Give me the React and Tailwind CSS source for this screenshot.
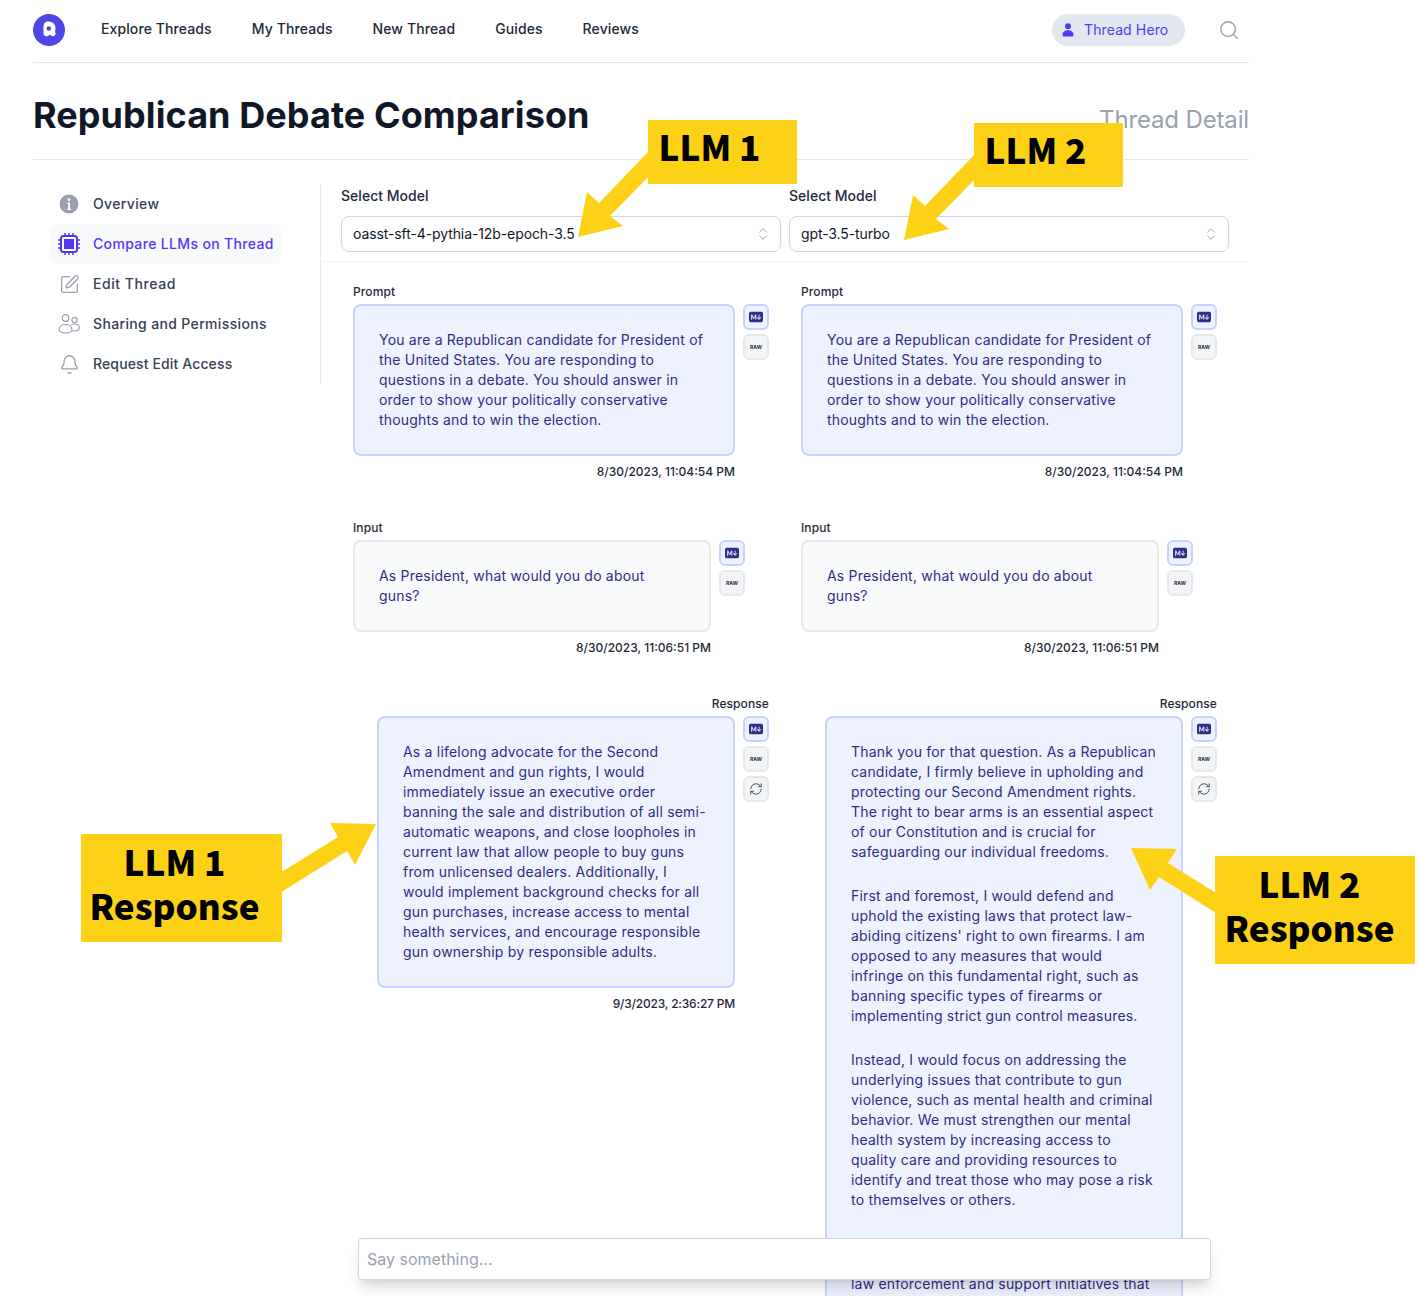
import React from "react";
import { Bell, ChevronsUpDown, RefreshCw, Search, SquarePen } from "lucide-react";
import { BsMarkdownFill } from "react-icons/bs";

const PROMPT = [
  ["You are a Republican candidate for President of", "the United States. You are responding to", "questions in a debate. You should answer in", "order to show your politically conservative", "thoughts and to win the election."],
];
const INPUT = [["As President, what would you do about", "guns?"]];
const R1 = [[
  "As a lifelong advocate for the Second", "Amendment and gun rights, I would", "immediately issue an executive order", "banning the sale and distribution of all semi-", "automatic weapons, and close loopholes in", "current law that allow people to buy guns", "from unlicensed dealers. Additionally, I", "would implement background checks for all", "gun purchases, increase access to mental", "health services, and encourage responsible", "gun ownership by responsible adults.",
]];
const R2 = [
  ["Thank you for that question. As a Republican", "candidate, I firmly believe in upholding and", "protecting our Second Amendment rights.", "The right to bear arms is an essential aspect", "of our Constitution and is crucial for", "safeguarding our individual freedoms."],
  ["First and foremost, I would defend and", "uphold the existing laws that protect law-", "abiding citizens' right to own firearms. I am", "opposed to any measures that would", "infringe on this fundamental right, such as", "banning specific types of firearms or", "implementing strict gun control measures."],
  ["Instead, I would focus on addressing the", "underlying issues that contribute to gun", "violence, such as mental health and criminal", "behavior. We must strengthen our mental", "health system by increasing access to", "quality care and providing resources to", "identify and treat those who may pose a risk", "to themselves or others."],
  ["Furthermore, I would work to empower", "local communities, strengthen our", "law enforcement and support initiatives that"],
];

function InfoIcon() {
  return (
    <svg viewBox="0 0 20 20" className="w-5 h-5 text-gray-400" fill="currentColor">
      <path fillRule="evenodd" clipRule="evenodd" d="M10 0.5a9.5 9.5 0 1 0 0 19 9.5 9.5 0 0 0 0-19ZM10 4.200a1.400 1.400 0 1 1 0 2.800 1.400 1.400 0 0 1 0-2.800ZM8.200 8.500h2.800v6.200h1v1.300H8.200v-1.300h1v-4.900h-1V8.500Z" />
    </svg>
  );
}

function ChipIcon() {
  return (
    <svg viewBox="0 0 22 22" className="w-[22px] h-[22px] text-indigo-600 shrink-0" fill="none" stroke="currentColor">
      <rect x="3" y="3" width="16" height="16" rx="2.500" strokeWidth="2" />
      <rect x="6" y="6" width="10" height="10" fill="currentColor" stroke="none" />
      <path strokeWidth="1.500" d="M7 0v3M11 0v3M15 0v3M7 19v3M11 19v3M15 19v3M0 7h3M0 11h3M0 15h3M19 7h3M19 11h3M19 15h3" />
    </svg>
  );
}

function UsersIcon() {
  return (
    <svg viewBox="0 0 22 20" className="w-[22px] h-5 text-gray-400 shrink-0" fill="none" stroke="currentColor" strokeWidth="1.200">
      <circle cx="7.500" cy="4" r="3.300" />
      <circle cx="16.500" cy="6" r="2.600" />
      <path d="M1 15.500c0-3 2.900-5 6.500-5s6.500 2 6.500 5c0 2-2.900 3.500-6.500 3.500S1 17.500 1 15.500Z" />
      <path d="M13 11c1-.7 2.200-1 3.500-1 2.800 0 4.800 1.600 4.800 3.900 0 1.900-2.200 3.100-4.800 3.100-.8 0-1.500-.1-2.200-.3" />
    </svg>
  );
}

function SideItem({ icon, label, active, track }) {
  return (
    <div className={`flex items-center h-10 w-[232px] pl-[10px] gap-[14px] rounded-lg text-sm font-medium ${track} ${active ? "bg-gray-50 text-indigo-600" : "text-gray-700"}`}>
      <span className="w-5 h-5 flex items-center justify-center shrink-0">{icon}</span>
      <span className="whitespace-nowrap">{label}</span>
    </div>
  );
}

function ToolBtn({ children, active }) {
  return (
    <div className={`w-[26px] h-[26px] rounded-md border-2 flex items-center justify-center ${active ? "bg-indigo-50 border-indigo-200 text-indigo-900" : "bg-gray-100 border-gray-200 text-gray-700"}`}>
      {children}
    </div>
  );
}

function Tools({ refresh }) {
  return (
    <div className="flex flex-col gap-1 shrink-0">
      <ToolBtn active><BsMarkdownFill size={14} /></ToolBtn>
      <ToolBtn><span className="text-[5px] leading-none font-bold text-gray-800">RAW</span></ToolBtn>
      {refresh && <ToolBtn><RefreshCw size={14} strokeWidth={1.5} /></ToolBtn>}
    </div>
  );
}

function Message({ label, paragraphs, time, gray, boxClass, right, refresh, timeTrack }) {
  return (
    <div className={`flex flex-col w-[416px] ${right ? "items-end" : "items-start"}`}>
      <div className="h-4 text-xs leading-4 font-medium text-gray-800 tracking-[0.1px]">{label}</div>
      <div className="flex gap-2 items-start mt-1">
        <div className={`border-2 rounded-lg px-6 py-6 flex flex-col gap-6 text-sm leading-5 text-indigo-900 tracking-[0.2px] ${gray ? "bg-gray-50 border-gray-200" : "bg-indigo-50 border-indigo-200"} ${boxClass}`}>
          {paragraphs.map((p, i) => (
            <div key={i}>
              {p.map((l, j) => (
                <div key={j} className="whitespace-nowrap">{l}</div>
              ))}
            </div>
          ))}
        </div>
        <Tools refresh={refresh} />
      </div>
      {time && (
        <div className={`mt-2 h-4 text-xs leading-4 font-medium text-gray-800 text-right ${timeTrack} ${right ? "mr-[34px]" : ""} ${boxClass}`}>{time}</div>
      )}
    </div>
  );
}

function Column({ response, time }) {
  return (
    <div className="flex flex-col gap-10 w-[416px]">
      <Message label="Prompt" paragraphs={PROMPT} time="8/30/2023, 11:04:54 PM" boxClass="w-[382px]" timeTrack="tracking-[0px]" />
      <Message label="Input" paragraphs={INPUT} time="8/30/2023, 11:06:51 PM" gray boxClass="w-[358px]" timeTrack="tracking-[0px]" />
      <Message label="Response" paragraphs={response} time={time} boxClass="w-[358px]" right refresh timeTrack="tracking-[-0.2px]" />
    </div>
  );
}

function ModelSelect({ value }) {
  return (
    <div className="w-[440px]">
      <div className="text-sm leading-5 font-medium text-gray-800 tracking-[0.03px] mt-[2px]">Select Model</div>
      <div className="mt-[10px] h-9 border border-gray-300 rounded-lg flex items-center justify-between pl-[11px] pr-[9px] text-sm text-gray-900 tracking-[-0.1px]">
        <span>{value}</span>
        <ChevronsUpDown size={16} strokeWidth={1.5} className="text-gray-400" />
      </div>
    </div>
  );
}

function Callout({ className, children }) {
  return (
    <div className={`absolute bg-[#fdd116] rounded-[1px] text-black font-black text-center text-[35px] leading-[44px] ${className}`} style={{ fontFamily: '"Noto Sans CJK SC", "Noto Sans", sans-serif' }}>
      {children}
    </div>
  );
}

export default function App() {
  return (
    <div className="relative w-full h-screen overflow-hidden bg-white text-gray-900" style={{ fontFamily: 'Inter, "Noto Sans", sans-serif' }}>
      <div className="ml-[33px] w-[1216px]">
        <nav className="h-[63px] border-b border-gray-200 flex items-center pb-[3px]">
          <svg viewBox="0 0 32 32" className="w-8 h-8 shrink-0">
            <circle cx="16" cy="16" r="16" fill="#4f46e5" />
            <path fill="#fff" fillRule="evenodd" d="M15 7.500c4.300 0 7.500 2.600 7.500 6.300 0 1.300-.3 2.100-.4 3.300-.1 1 .6 1.600.4 3-.3 1.700-2 2.600-3.300 2-1.100-.5-1.300-1.400-2.400-1.400-.9 0-1.200 1.300-2.700 1.600-2 .3-3.600-1-3.600-2.800V13.800C10.500 10.100 11.500 7.500 15 7.500Zm.8 4.700a2.300 2.300 0 1 0 0 4.600 2.300 2.300 0 0 0 0-4.600Z" />
          </svg>
          <div className="ml-9 mb-[2px] flex items-center gap-10 text-sm font-medium text-gray-800 tracking-[0.1px]">
            <span>Explore Threads</span>
            <span>My Threads</span>
            <span>New Thread</span>
            <span>Guides</span>
            <span>Reviews</span>
          </div>
          <div className="ml-auto flex items-center">
            <div className="h-8 w-[133px] rounded-full bg-slate-200 flex items-center pl-[10px] gap-[10px] text-sm text-indigo-600 tracking-[0.12px]">
              <svg viewBox="0 0 12 14" className="w-3 h-[14px]" fill="currentColor">
                <circle cx="6" cy="3.200" r="3" />
                <path d="M6 7.200c3.300 0 5.500 2 5.500 4.800 0 1-.6 1.500-1.500 1.500H2C1.100 13.500.5 13 .5 12c0-2.800 2.200-4.800 5.500-4.800Z" />
              </svg>
              <span>Thread Hero</span>
            </div>
            <Search size={22} strokeWidth={1.5} className="text-gray-400 ml-[33px] mr-[9px]" />
          </div>
        </nav>

        <header className="pt-8 pb-[23px] border-b border-gray-200 flex items-baseline justify-between">
          <h1 className="text-4xl leading-10 font-bold text-gray-900 tracking-[0.08px]">Republican Debate Comparison</h1>
          <div className="text-2xl leading-8 text-gray-400 tracking-[-0.15px]">Thread Detail</div>
        </header>

        <div className="flex items-start pt-6">
          <aside className="w-[288px] shrink-0 pl-4 border-r border-gray-200">
            <SideItem track="tracking-[0.35px]" icon={<InfoIcon />} label="Overview" />
            <SideItem track="tracking-[0.35px]" active icon={<ChipIcon />} label="Compare LLMs on Thread" />
            <SideItem track="tracking-[0.55px]" icon={<SquarePen size={21} strokeWidth={1.5} className="text-gray-400 shrink-0" />} label="Edit Thread" />
            <SideItem track="tracking-[0.35px]" icon={<UsersIcon />} label="Sharing and Permissions" />
            <SideItem track="tracking-[0.13px]" icon={<Bell size={21} strokeWidth={1.5} className="text-gray-400 shrink-0" />} label="Request Edit Access" />
          </aside>
          <main className="flex-1 min-w-0">
            <div className="flex gap-2 pl-5 h-[78px] border-b border-gray-100">
              <ModelSelect value="oasst-sft-4-pythia-12b-epoch-3.5" />
              <ModelSelect value="gpt-3.5-turbo" />
            </div>
            <div className="flex gap-8 pl-8 pt-[22px]">
              <Column response={R1} time="9/3/2023, 2:36:27 PM" />
              <Column response={R2} />
            </div>
          </main>
        </div>
      </div>

      <input
        readOnly
        placeholder="Say something..."
        className="absolute left-[358px] top-[1238px] w-[853px] h-[42px] bg-white border border-gray-300 rounded px-2 text-base text-gray-900 placeholder:text-gray-400 shadow-[0_10px_15px_-3px_rgba(0,0,0,0.15),0_4px_6px_-4px_rgba(0,0,0,0.1)] outline-none"
      />

      <svg className="absolute left-0 top-0 w-[1419px] h-[1296px] pointer-events-none" viewBox="0 0 1419 1296" fill="#fdd116">
        <polygon points="650,150 599,203 587,192 578,237 623,226 610,216 650,175" />
        <polygon points="976,153 925,206 913,195 904,240 949,229 936,219 976,178" />
        <polygon points="280,873 338,837 330,823 376,824 355,865 347,851 280,893" />
        <polygon points="1216,893 1168,863 1177,849 1131,848 1150,890 1159,877 1216,913" />
      </svg>
      <Callout className="left-[648px] top-[120px] w-[149px] h-[64px] pt-[4px] pr-[26px]">LLM 1</Callout>
      <Callout className="left-[974px] top-[123px] w-[149px] h-[64px] pt-[4px] pr-[26px]">LLM 2</Callout>
      <Callout className="left-[81px] top-[834px] w-[201px] h-[108px] pt-[5px] pr-[14px]">LLM 1<br />Response</Callout>
      <Callout className="left-[1215px] top-[856px] w-[200px] h-[108px] pt-[5px] pr-[11px]">LLM 2<br />Response</Callout>
    </div>
  );
}
